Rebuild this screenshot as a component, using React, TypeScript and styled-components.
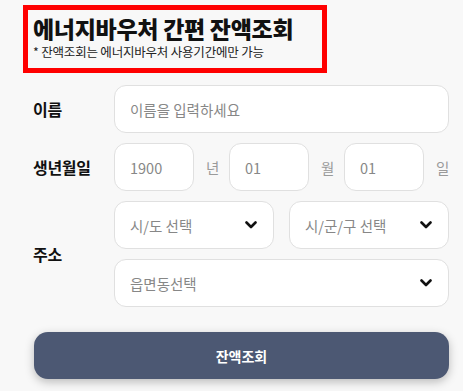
import React from "react";
import styled, { createGlobalStyle } from "styled-components";

const Global = createGlobalStyle`
  html, body { margin: 0; padding: 0; background: #f8f8f8; }
  body { font-family: "Noto Sans CJK KR", "Noto Sans", sans-serif; color: #111; }
  * { box-sizing: border-box; }
`;

const Page = styled.div`
  width: 463px;
  height: 391px;
  background: #f8f8f8;
  padding: 5px 14px 0 23px;
  display: flex;
  flex-direction: column;
`;

const TitleBox = styled.div`
  width: 304px;
  height: 68px;
  border: 5px solid #ff0000;
  padding: 5px 0 0 5px;
  display: flex;
  flex-direction: column;
`;

const Title = styled.h1`
  margin: 0;
  font-size: 23px;
  font-weight: 800;
  line-height: 27px;
  letter-spacing: -0.3px;
  color: #111;
`;

const Sub = styled.p`
  margin: 3px 0 0;
  font-size: 12.5px;
  line-height: 14px;
  color: #222;
  letter-spacing: -0.2px;
`;

const Form = styled.div`
  display: grid;
  grid-template-columns: 91px 335px;
  align-items: center;
  row-gap: 10px;
  margin-top: 12px;
`;

const Label = styled.div`
  padding-left: 10px;
  font-size: 16px;
  font-weight: 700;
  color: #111;
  letter-spacing: -0.3px;
`;

const Field = styled.div<{ $w?: number }>`
  height: 48px;
  width: ${(p) => (p.$w ? `${p.$w}px` : "100%")};
  background: #fff;
  border: 1px solid #e0e0e0;
  border-radius: 12px;
  display: flex;
  align-items: center;
  justify-content: space-between;
  padding: 0 16px 0 15px;
  font-size: 14.5px;
  color: #878787;
  flex-shrink: 0;
`;

const Row = styled.div`
  display: flex;
  align-items: center;
  gap: 12px;
`;

const Unit = styled.span`
  font-size: 14.5px;
  color: #9a9a9a;
  width: 11px;
`;

const Stack = styled.div`
  display: flex;
  flex-direction: column;
  gap: 10px;
`;

const Pair = styled.div`
  display: grid;
  grid-template-columns: 1fr 1fr;
  gap: 15px;
`;

const Button = styled.button`
  margin: 25px 0 0 11px;
  width: 415px;
  height: 47px;
  border: none;
  border-radius: 14px;
  background: #4c5873;
  color: #fff;
  font-family: inherit;
  font-size: 14px;
  font-weight: 700;
  box-shadow: 0 3px 10px rgba(0, 0, 0, 0.25);
`;

const Chevron = () => (
  <svg width="12" height="8" viewBox="0 0 12 8">
    <polyline
      points="1.5,1.5 6,6 10.5,1.5"
      fill="none"
      stroke="#111"
      strokeWidth="2.6"
      strokeLinecap="round"
      strokeLinejoin="round"
    />
  </svg>
);

const Select = ({ text }: { text: string }) => (
  <Field>
    <span>{text}</span>
    <Chevron />
  </Field>
);

export default function App() {
  return (
    <Page>
      <Global />
      <TitleBox>
        <Title>에너지바우처 간편 잔액조회</Title>
        <Sub>* 잔액조회는 에너지바우처 사용기간에만 가능</Sub>
      </TitleBox>
      <Form>
        <Label>이름</Label>
        <Field>이름을 입력하세요</Field>
        <Label>생년월일</Label>
        <Row>
          <Field $w={80}>1900</Field>
          <Unit>년</Unit>
          <Field $w={80}>01</Field>
          <Unit>월</Unit>
          <Field $w={80}>01</Field>
          <Unit>일</Unit>
        </Row>
        <Label>주소</Label>
        <Stack>
          <Pair>
            <Select text="시/도 선택" />
            <Select text="시/군/구 선택" />
          </Pair>
          <Select text="읍면동선택" />
        </Stack>
      </Form>
      <Button>잔액조회</Button>
    </Page>
  );
}
